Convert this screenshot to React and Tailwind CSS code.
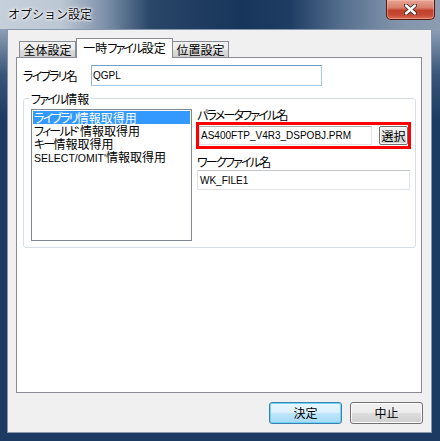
function T({ children }) {
  const parts = String(children).match(/[\u3040-\u30ff]+|[\x20-\x7e]+|[^\u3040-\u30ff\x20-\x7e]+/g) || [];
  return parts.map((p, i) => {
    if (/^[\u3040-\u30ff]+$/.test(p)) {
      return (
        <span key={i} className="tracking-[-1.8px]">
          {p}
        </span>
      );
    }
    if (/^[\x20-\x7e]+$/.test(p)) {
      return (
        <span key={i} className="font-['Liberation_Sans',sans-serif] text-[10.5px]">
          {p}
        </span>
      );
    }
    return <span key={i}>{p}</span>;
  });
}

export default function App() {
  const jp = "font-['Noto_Sans_CJK_JP',sans-serif]";
  return (
    <div className={`w-[440px] h-[441px] flex flex-col overflow-hidden bg-[#1d3b62] ${jp} text-[12px] text-black [font-feature-settings:'palt']`}>
      {/* title bar */}
      <div className="h-[29px] shrink-0 flex items-start justify-between bg-[linear-gradient(90deg,#c6d0db_0%,#bcc7d4_14%,#7d90a9_24%,#2a4769_34%,#17345a_55%,#1f3d63_66%,#56708f_78%,#8193aa_90%,#8c9db2_100%)]">
        <span className="mt-[7px] ml-[8px] leading-[14px] text-[12px] text-[#0a0a0a] [font-feature-settings:normal] [text-shadow:0_0_5px_#ffffff,0_0_3px_#ffffff,0_0_2px_#ffffff]">
          オプション設定
        </span>
        <div className="mr-[5px] w-[49px] h-[20px] rounded-b-[5px] border border-t-0 border-[#4e1a12] bg-[linear-gradient(180deg,#e8a595_0%,#d8806c_40%,#c2412c_55%,#c84b34_80%,#dc6f55_100%)] shadow-[inset_0_0_0_1px_rgba(255,200,190,0.45)] flex items-center justify-center">
          <svg width="13" height="11" viewBox="0 0 13 11">
            <path d="M2 1.5 L11 9.5 M11 1.5 L2 9.5" stroke="#3b2a28" strokeWidth="4.2" strokeLinecap="round" />
            <path d="M2 1.5 L11 9.5 M11 1.5 L2 9.5" stroke="#ffffff" strokeWidth="2.4" strokeLinecap="round" />
          </svg>
        </div>
      </div>

      {/* frame body */}
      <div className="flex-1 pl-[7px] pr-[8px] pb-[8px] bg-[linear-gradient(180deg,#8e9fb5_0px,#3a5679_45px,#1d3b62_90px,#1d3b62_100%)]">
        <div className="h-full border border-[#8796aa] bg-[#f0f0f0] flex flex-col pt-[8px] pl-[8px]">
          {/* tabs */}
          <div className="flex items-end h-[19px] pl-[3px]">
            <div className="w-[57px] h-[16px] border border-b-0 border-[#898c95] bg-[linear-gradient(180deg,#f2f2f2,#ebebeb_50%,#dddddd_50%,#cfcfcf)] flex items-center justify-center leading-[14px]">
              全体設定
            </div>
            <div className="relative z-10 -mb-px w-[97px] h-[20px] border border-b-0 border-[#898c95] bg-white flex justify-center pt-[2px] leading-[14px]">
              <T>一時ファイル設定</T>
            </div>
            <div className="w-[56px] h-[16px] border border-b-0 border-l-0 border-[#898c95] bg-[linear-gradient(180deg,#f2f2f2,#ebebeb_50%,#dddddd_50%,#cfcfcf)] flex items-center justify-center leading-[14px]">
              位置設定
            </div>
          </div>

          {/* panel */}
          <div className="w-[406px] h-[336px] border border-[#898c95] bg-white pl-[6px] pt-[7px]">
            <div className="flex items-center h-[21px]">
              <span className="w-[68px] leading-[14px]">
                <T>ライブラリ名</T>
              </span>
              <div className="w-[231px] h-[21px] border border-[#a9c6e3] border-t-[#6f9cc9] border-l-[#8fb4d8] bg-white flex items-center pl-[1px] font-['Liberation_Sans',sans-serif] text-[10px] text-[#000]">
                QGPL
              </div>
            </div>

            {/* group box */}
            <div className="relative mt-[12px] w-[393px] h-[150px] border border-[#d5dfe5] rounded-[3px] flex pl-[7px] pt-[10px]">
              <span className="absolute -top-[7px] left-[5px] px-[2px] bg-white leading-[14px]">
                <T>ファイル情報</T>
              </span>

              <div className="w-[161px] h-[132px] border border-[#828790] p-px flex flex-col bg-white">
                <div className="h-[13px] leading-[13px] pl-[1px] bg-[#3399ff] text-white">
                  <T>ライブラリ情報取得用</T>
                </div>
                <div className="h-[13px] leading-[13px] pl-[1px]">
                  <T>フィールド`情報取得用</T>
                </div>
                <div className="h-[13px] leading-[13px] pl-[1px]">
                  <T>キー情報取得用</T>
                </div>
                <div className="h-[13px] leading-[13px] pl-[1px]">
                  <T>SELECT/OMIT'情報取得用</T>
                </div>
              </div>

              <div className="ml-[4px] w-[215px] flex flex-col">
                <span className="h-[12px] leading-[12px] pl-[1px]">
                  <T>パラメータファイル名</T>
                </span>
                <div className="mt-[1px] h-[27px] border-[3px] border-[#ff0000] flex items-center justify-between">
                  <div className="w-[173px] h-[19px] border border-[#e2e3ea] border-t-[#abadb3] bg-white flex items-center pl-[1px] font-['Liberation_Sans',sans-serif] text-[10px]">
                    AS400FTP_V4R3_DSPOBJ.PRM
                  </div>
                  <div className="w-[29px] h-[19px] border border-[#707070] rounded-[2px] bg-[linear-gradient(180deg,#f2f2f2,#ebebeb_50%,#dddddd_50%,#cfcfcf)] flex items-center justify-center leading-[14px] shadow-[inset_0_0_0_1px_#fcfcfc]">
                    選択
                  </div>
                </div>
                <span className="mt-[7px] h-[12px] leading-[12px] pl-[1px]">
                  <T>ワークファイル名</T>
                </span>
                <div className="mt-[2px] ml-[1px] w-[213px] h-[20px] border border-[#e2e3ea] border-t-[#c3c6cc] bg-white flex items-center pl-[2px] font-['Liberation_Sans',sans-serif] text-[10px]">
                  WK_FILE1
                </div>
              </div>
            </div>
          </div>

          {/* buttons */}
          <div className="mt-[9px] flex justify-end gap-[8px] pr-[8px]">
            <div className="w-[73px] h-[22px] rounded-[3px] border border-[#3c7fb1] bg-[linear-gradient(180deg,#eaf6fd,#d9f0fc_50%,#bee6fd_50%,#a7d9f5)] shadow-[inset_0_0_0_1px_#6fd3fa] flex items-center justify-center leading-[14px]">
              決定
            </div>
            <div className="w-[73px] h-[22px] rounded-[3px] border border-[#707070] bg-[linear-gradient(180deg,#f2f2f2,#ebebeb_50%,#dddddd_50%,#cfcfcf)] shadow-[inset_0_0_0_1px_#fcfcfc] flex items-center justify-center leading-[14px]">
              中止
            </div>
          </div>
        </div>
      </div>
    </div>
  );
}
